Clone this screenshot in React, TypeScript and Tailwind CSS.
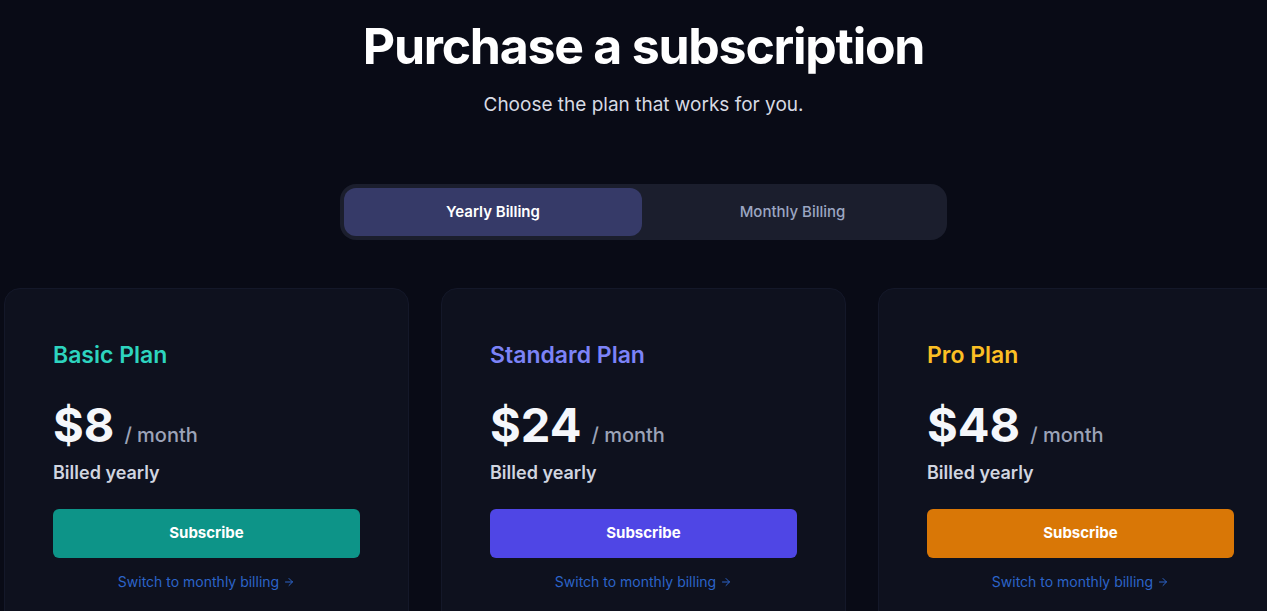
import { ArrowRight } from 'lucide-react';

const plans = [
  {
    name: 'Basic Plan',
    price: '$8',
    nameColor: 'text-[#2dd4bf]',
    button: 'bg-[#0d9488]',
  },
  {
    name: 'Standard Plan',
    price: '$24',
    nameColor: 'text-[#7c83f7]',
    button: 'bg-[#4f46e5]',
  },
  {
    name: 'Pro Plan',
    price: '$48',
    nameColor: 'text-[#fbbf24]',
    button: 'bg-[#d97706]',
  },
];

export default function App() {
  return (
    <div
      className="w-full h-screen overflow-hidden bg-[#090b16] text-white"
      style={{ fontFamily: 'Inter, "Noto Sans", sans-serif' }}
    >
      <div className="w-[1287px] px-1 flex flex-col items-center">
        {/* Header */}
        <h1 className="mt-4 text-[50px] leading-[60px] font-bold tracking-tight text-white">
          Purchase a subscription
        </h1>
        <p className="mt-[15px] text-[19px] leading-7 text-[#d7dae3]">
          Choose the plan that works for you.
        </p>

        {/* Billing toggle */}
        <div className="mt-[65px] w-[607px] h-14 p-1 flex rounded-2xl bg-[#1b1e2d]">
          <button className="w-[298px] h-12 rounded-xl bg-[#363a68] text-[15px] font-semibold text-white">
            Yearly Billing
          </button>
          <button className="flex-1 h-12 rounded-xl text-[15px] font-medium text-[#9ba6c2]">
            Monthly Billing
          </button>
        </div>

        {/* Plans */}
        <div className="mt-12 w-full grid grid-cols-3 gap-8">
          {plans.map((plan) => (
            <div
              key={plan.name}
              className="h-[400px] rounded-2xl border border-[#141829] bg-[#0e111e] px-12 pt-[50px]"
            >
              <h2 className={`text-[23px] leading-8 font-semibold ${plan.nameColor}`}>{plan.name}</h2>
              <div className="mt-[30px] flex items-baseline gap-2.5">
                <span className="text-[47px] leading-[48px] font-bold text-[#f5f7fb]">{plan.price}</span>
                <span className="text-xl font-medium text-[#9ca3b8]">/ month</span>
              </div>
              <p className="mt-[10px] text-lg font-semibold text-[#d1d5e0]">Billed yearly</p>
              <button
                className={`mt-[22px] w-full h-[49px] rounded-md text-[15px] font-bold text-white ${plan.button}`}
              >
                Subscribe
              </button>
              <a className="mt-[14px] flex items-center justify-center gap-1 text-sm text-[#2c64c9]">
                Switch to monthly billing
                <ArrowRight className="w-3 h-3" strokeWidth={2} />
              </a>
            </div>
          ))}
        </div>
      </div>
    </div>
  );
}
